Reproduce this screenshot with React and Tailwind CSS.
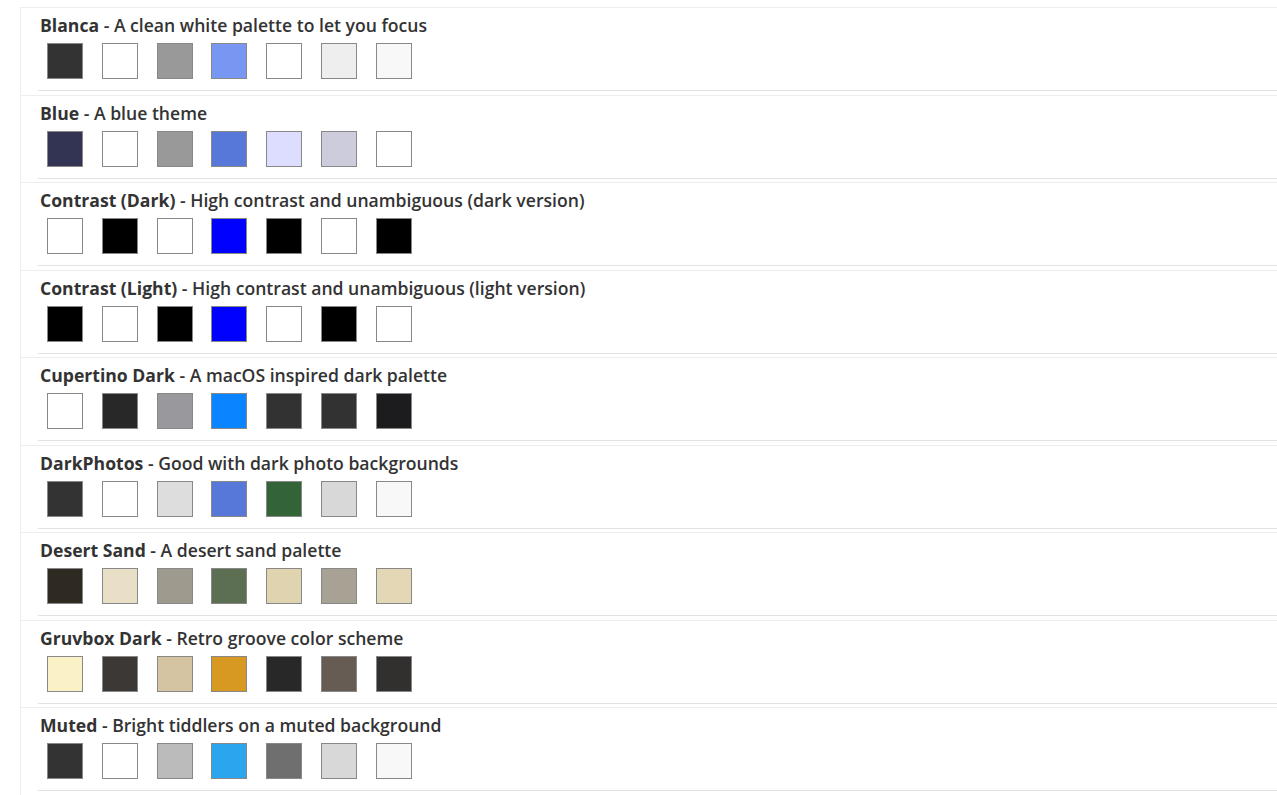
import React from 'react'

const palettes = [
  { name: 'Blanca', desc: 'A clean white palette to let you focus', colors: ['#333333', '#ffffff', '#999999', '#7897f3', '#ffffff', '#eeeeee', '#f8f8f8'] },
  { name: 'Blue', desc: 'A blue theme', colors: ['#333353', '#ffffff', '#999999', '#5778d8', '#ddddff', '#ccccdd', '#ffffff'] },
  { name: 'Contrast (Dark)', desc: 'High contrast and unambiguous (dark version)', colors: ['#ffffff', '#000000', '#ffffff', '#0000ff', '#000000', '#ffffff', '#000000'] },
  { name: 'Contrast (Light)', desc: 'High contrast and unambiguous (light version)', colors: ['#000000', '#ffffff', '#000000', '#0000ff', '#ffffff', '#000000', '#ffffff'] },
  { name: 'Cupertino Dark', desc: 'A macOS inspired dark palette', colors: ['#ffffff', '#282828', '#98989d', '#0a84ff', '#323232', '#323232', '#1c1c1e'] },
  { name: 'DarkPhotos', desc: 'Good with dark photo backgrounds', colors: ['#333333', '#ffffff', '#dddddd', '#5778d8', '#336438', '#d8d8d8', '#f8f8f8'] },
  { name: 'Desert Sand', desc: 'A desert sand palette', colors: ['#2e2a22', '#e9dfc7', '#9e9a8e', '#5c6f52', '#e0d3af', '#a8a295', '#e4d7b5'] },
  { name: 'Gruvbox Dark', desc: 'Retro groove color scheme', colors: ['#fbf1c7', '#3c3836', '#d5c4a1', '#d79921', '#282828', '#665c54', '#32302f'] },
  { name: 'Muted', desc: 'Bright tiddlers on a muted background', colors: ['#333333', '#ffffff', '#bbbbbb', '#29a6ee', '#6f6f70', '#d8d8d8', '#f8f8f8'] },
]

const PaletteItem = ({ p }) => {
  return (
    <div className="h-[87.5px] border-t border-l border-[#eeeeee]">
      <div className="pt-[5px] pl-[19px] text-[17.6px] leading-[24px] font-semibold text-[#333333]">
        <span className="font-bold">{p.name}</span> - {p.desc}
      </div>
      <div className="mt-[6px] ml-[26px] flex gap-[18.8px]">
        {p.colors.map((c, i) => (
          <div key={i} className="w-[36px] h-[36px] border border-[#888888]" style={{ backgroundColor: c }} />
        ))}
      </div>
      <div className="mt-[11px] ml-[17px] h-px bg-[#e2e2e2]" />
    </div>
  )
}

export default function App() {
  return (
    <div className="min-h-screen bg-white pt-[7px] pl-[20px] overflow-hidden" style={{ fontFamily: '"Open Sans", "Noto Sans", sans-serif' }}>
      {palettes.map((p) => (
        <PaletteItem key={p.name} p={p} />
      ))}
    </div>
  )
}
